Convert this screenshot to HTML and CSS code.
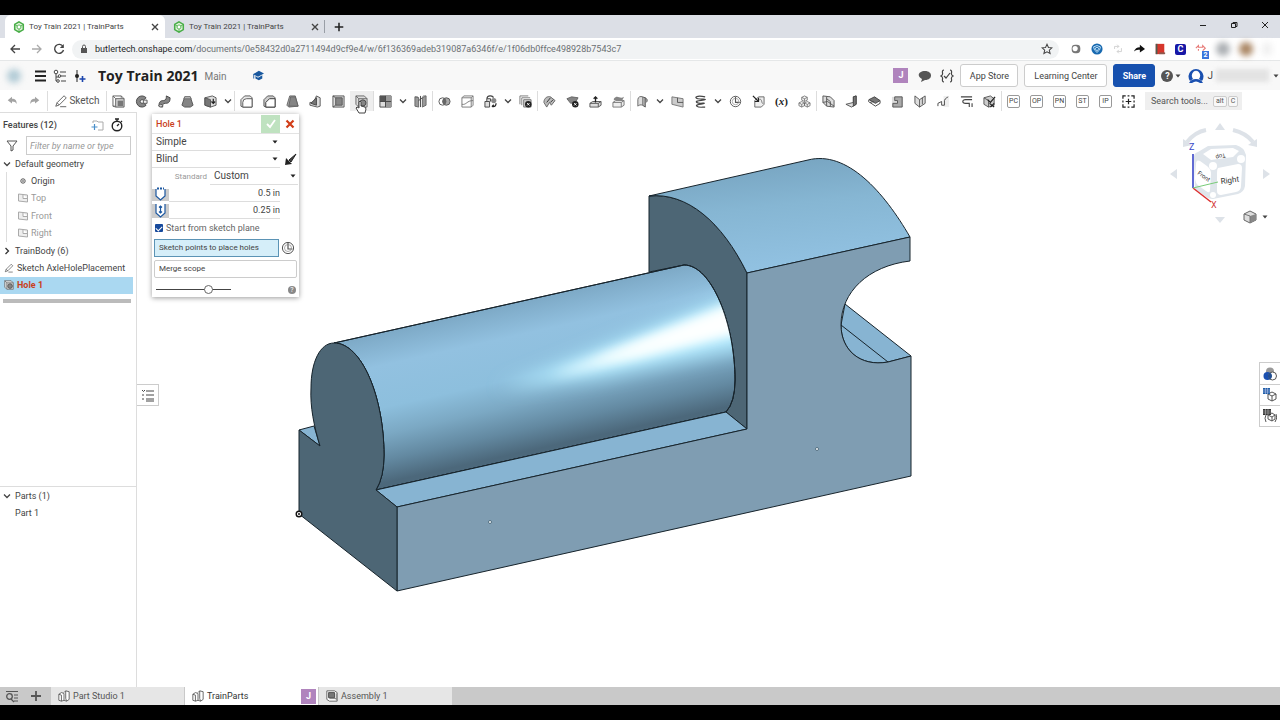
FILE: index.html
```html
<!DOCTYPE html>
<html lang="en">
<head>
<meta charset="utf-8">
<title>Toy Train 2021 | TrainParts</title>
<link rel="stylesheet" href="styles.css">
</head>
<body>
<svg class="defs" aria-hidden="true">
  <defs>
    <symbol id="logo" viewBox="0 0 14 14"><path d="M7 1l5 3v6l-5 3-5-3V4z" fill="#e3f4dc" stroke="#49ae48" stroke-width="1.8"/><path d="M7 4.5l2.2 1.2v2.6L7 9.5 4.8 8.300V5.700z" fill="#fff" stroke="#49ae48"/><path d="M2 4l3 2M12 4L9 6M7 13V9.500" stroke="#49ae48"/></symbol>
    <symbol id="x" viewBox="0 0 10 10"><path d="M2 2l6 6M8 2L2 8" stroke="currentColor" stroke-width="1.4"/></symbol>
    <symbol id="plus" viewBox="0 0 14 14"><path d="M7 2v10M2 7h10" stroke="currentColor" stroke-width="1.8"/></symbol>
    <symbol id="chev" viewBox="0 0 10 10"><path d="M2 3.500l3 3 3-3" fill="none" stroke="currentColor" stroke-width="1.300"/></symbol>
    <symbol id="caret" viewBox="0 0 8 8"><path d="M1.500 2.500h5L4 5.500z" fill="currentColor"/></symbol>
    <symbol id="undo" viewBox="0 0 14 14"><path d="M2 6l5-4v2.500c4 0 5.500 2 5.500 6C11.500 8.500 10 7.600 7 7.600V10z" fill="#a3a3a3"/></symbol>
    <symbol id="pencil" viewBox="0 0 16 16"><path d="M2 14l1.500-4L11.500 2 14 4.500 6 12.500zM3.500 10L6 12.500M7 14.500h7" fill="none" stroke="currentColor"/></symbol>
    <symbol id="extrude" viewBox="0 0 14 14"><path d="M1 1h9v2M1 1v11h2M1 1l3 3M10 1l3 3M1 12l3 1" fill="#eee" stroke="#666"/><path d="M4 4h9v9H4z" fill="#ddd" stroke="#555"/><path d="M6 6h6v6H6z" fill="#777"/></symbol>
    <symbol id="revolve" viewBox="0 0 14 14"><path d="M12 3A6 6 0 1 0 12 11L9 8.500A2 2 0 1 1 9 5.500z" fill="#858585" stroke="#444"/><path d="M9 5.500h4v3.500H9z" fill="#eee" stroke="#555"/></symbol>
    <symbol id="sweep" viewBox="0 0 14 14"><path d="M1 12C1 7 3 6 6 6s3-3 3-5l4 2c0 4-1 6-5 6-3 0-3 1-3 4z" fill="#858585" stroke="#444"/><ellipse cx="3" cy="11.500" rx="2" ry="1.500" fill="#ccc" stroke="#555"/></symbol>
    <symbol id="loft" viewBox="0 0 14 14"><path d="M4 2h6l3 9-3 2H4l-3-2z" fill="#858585" stroke="#555"/><path d="M4 2h6l1 2H3z" fill="#ccc" stroke="#555" stroke-width=".7"/></symbol>
    <symbol id="thicken" viewBox="0 0 14 14"><path d="M1 3l8-2 4 2v8l-6 2-6-2z" fill="#ddd" stroke="#555"/><path d="M1 3l6 2v8l-6-2z" fill="#777" stroke="#555"/><path d="M10 4v5M8 7l2 2 2-2" fill="none" stroke="#222" stroke-width="1.300"/></symbol>
    <symbol id="fillet" viewBox="0 0 14 14"><path d="M1 12V5l4-4h6l2 2v10H3z" fill="#e8e8e8" stroke="#555"/><path d="M3 13V8q0-4 4-4h6v9z" fill="#fff" stroke="#555"/></symbol>
    <symbol id="chamfer" viewBox="0 0 14 14"><path d="M1 12V5l4-4h6l2 2v10H3z" fill="#ccc" stroke="#555"/><path d="M3 13V8l4-4h6v9z" fill="#fff" stroke="#333"/></symbol>
    <symbol id="draft" viewBox="0 0 14 14"><path d="M4 1h6l3 11-10 1-2-2z" fill="#aaa" stroke="#666"/><path d="M5 2h5l3 10H3z" fill="#858585" stroke="#666"/></symbol>
    <symbol id="rib" viewBox="0 0 14 14"><path d="M8 1l4 2v9l-3 1-8-2V8h4z" fill="#ddd" stroke="#555"/><path d="M8 3v8L2 9z" fill="#777" stroke="#444"/></symbol>
    <symbol id="shell" viewBox="0 0 14 14"><path d="M1 1h12v12H1z" fill="#ddd" stroke="#555"/><path d="M4 3h7v8H4z" fill="#858585" stroke="#555"/><path d="M1 1l3 2M1 13l3-2" stroke="#555"/></symbol>
    <symbol id="hole" viewBox="0 0 14 14"><path d="M1 1h9l3 3v9H4l-3-3z" fill="#ddd" stroke="#666"/><path d="M1 1l3 3h9M4 4v9" fill="none" stroke="#666"/><circle cx="8.500" cy="8.500" r="3.300" fill="#858585" stroke="#444"/></symbol>
    <symbol id="pattern" viewBox="0 0 14 14"><path d="M1 1h12v12H1z" fill="#ddd" stroke="#444"/><path d="M1 1h6v6H1z" fill="#555"/><path d="M7 7h6v6H7zM7 1h6v6H7z" fill="#999"/><path d="M7 1v12M1 7h12" stroke="#444"/></symbol>
    <symbol id="mirror" viewBox="0 0 14 14"><path d="M1 2l4 1v10l-4-1zM9 3l4-2v10l-4 2z" fill="#999" stroke="#666"/><path d="M7 1v12M9 3L5 6" stroke="#444"/><path d="M1 2h3l1 1M13 1h-3L9 3" fill="none" stroke="#777"/></symbol>
    <symbol id="boolean" viewBox="0 0 14 14"><circle cx="5" cy="7" r="4" fill="#fff" stroke="#555"/><circle cx="9" cy="7" r="4" fill="#aaa" stroke="#555"/><path d="M7 3.500a4 4 0 0 1 0 7 4 4 0 0 1 0-7" fill="#666"/></symbol>
    <symbol id="split" viewBox="0 0 14 14"><path d="M1 3l2-2h10v10l-2 2H1zM1 3h10v10M11 3l2-2" fill="#fff" stroke="#777"/><path d="M1 10c5 1 5-4 12-4" fill="none" stroke="#777"/></symbol>
    <symbol id="transform" viewBox="0 0 14 14"><path d="M1 7h5v6H1zM3 7V4h4v3" fill="#ddd" stroke="#444"/><path d="M3 4C4-1 10 1 10 3" fill="none" stroke="#444" stroke-width="1.300"/><circle cx="10.500" cy="6" r="2.800" fill="#888"/><path d="M13 9q0 4-4 3.500M10.500 10.500L8.500 12.500" fill="none" stroke="#222" stroke-width="1.300"/></symbol>
    <symbol id="delpart" viewBox="0 0 14 14"><path d="M1 1h9M1 1v9M3 3h9M3 3v8M5 5h8v8H5z" fill="#ccc" stroke="#777"/><circle cx="10" cy="10" r="3.500" fill="#222"/><path d="M8.700 8.700l2.600 2.600M11.300 8.700l-2.600 2.600" stroke="#fff"/></symbol>
    <symbol id="modfillet" viewBox="0 0 14 14"><path d="M1 8C1 3 5 1 8 2l5 4-4 5-2-3-3 5z" fill="#bbb" stroke="#666"/><path d="M4 8l4-5M8 8l3-3" stroke="#333"/></symbol>
    <symbol id="delface" viewBox="0 0 14 14"><path d="M1 4l5-2 7 1-3 5-5 1z" fill="#858585" stroke="#666"/><circle cx="10" cy="10" r="3.500" fill="#222"/><path d="M8.700 8.700l2.600 2.600M11.300 8.700l-2.600 2.600" stroke="#fff"/></symbol>
    <symbol id="moveface" viewBox="0 0 14 14"><path d="M1 9l3-2h9v4l-3 2H1z" fill="#ddd" stroke="#555"/><path d="M1 9h9v4M10 9l3-2" fill="none" stroke="#555"/><path d="M7 8V2M5 4l2-2 2 2" fill="none" stroke="#222" stroke-width="1.400"/></symbol>
    <symbol id="repface" viewBox="0 0 14 14"><path d="M1 8l3-2h9v5l-3 2H1zM1 8h9v5M10 8l3-2" fill="#eee" stroke="#777"/><path d="M2 4c4-5 6 1 11-2l-2 4C8 8 6 4 2 6z" fill="#858585"/></symbol>
    <symbol id="offset" viewBox="0 0 14 14"><path d="M2 12V5c0-3 3-4 5-3v9c-2-1-4 0-5 1z" fill="#ddd" stroke="#666"/><path d="M7 2l3 1v10l-3-2M10 3c2 1 3 3 1 5" fill="#aaa" stroke="#555"/></symbol>
    <symbol id="plane" viewBox="0 0 14 14"><path d="M1 2l12 2v9L1 10z" fill="#ccc" stroke="#777"/><path d="M7 3v5h6" fill="none" stroke="#555"/></symbol>
    <symbol id="helix" viewBox="0 0 14 14"><path d="M12 2C2 0 0 3 4 4s9 0 8 1S0 6 3 8s9 0 8 1-10 1-8 3 6 1 9 1" fill="none" stroke="#444" stroke-width="1.300"/></symbol>
    <symbol id="clock" viewBox="0 0 14 14"><circle cx="7" cy="7" r="5.600" fill="#fff" stroke="#555"/><path d="M7 2v6h4.500" fill="none" stroke="#555" stroke-width="1.200"/><circle cx="7" cy="7" r="3.500" fill="none" stroke="#888" stroke-width=".7"/></symbol>
    <symbol id="derive" viewBox="0 0 14 14"><path d="M3 6l4-4h6v8l-3 3H3z" fill="#eee" stroke="#666"/><path d="M1 1l6 6M7 3v4H3" fill="none" stroke="#222" stroke-width="1.300"/><path d="M8 5c3-2 2 5 4 4" fill="none" stroke="#777"/></symbol>
    <symbol id="comp" viewBox="0 0 14 14"><path d="M7 1l3 1.500v3L7 7 4 5.500v-3zM4 7l3 1.500v3L4 13l-3-1.500v-3zM10 7l3 1.500v3L10 13l-3-1.500v-3zM4 2.500L7 4l3-1.500M7 4v3M1 8.500L4 10l3-1.500 3 1.500 3-1.500M4 10v3M10 10v3" fill="#eee" stroke="#666" stroke-width=".8"/></symbol>
    <symbol id="sheet" viewBox="0 0 14 14"><path d="M1 1l8 1 4 4v7l-8-1-4-4z" fill="#ddd" stroke="#555"/><path d="M5 2v10M1 8l5-1 7 5M5 4l4 3v5" fill="none" stroke="#555"/></symbol>
    <symbol id="flange" viewBox="0 0 14 14"><path d="M9 2l3-1v9l-5 3-6-3 8-2z" fill="#ddd" stroke="#555"/><path d="M9 2l3-1v9l-3 2z" fill="#777" stroke="#444"/></symbol>
    <symbol id="hem" viewBox="0 0 14 14"><path d="M1 5l6-3 6 4-5 3z" fill="#777" stroke="#444"/><path d="M1 5c-1 2 0 3 1 3l6 4 5-3V6M2 8l4-1" fill="none" stroke="#444"/></symbol>
    <symbol id="tab" viewBox="0 0 14 14"><path d="M1 2h12v11H1z" fill="#ddd"/><path d="M4 2h8v11H2V9h5V6H4z" fill="#aaa" stroke="#555"/></symbol>
    <symbol id="bend" viewBox="0 0 14 14"><path d="M1 1l5 4v8L1 9zM6 5l6-4v8l-6 4M9 3v7" fill="#ddd" stroke="#555"/></symbol>
    <symbol id="jog" viewBox="0 0 14 14"><path d="M7 1h6v12H7z" fill="#eee"/><path d="M1 9l4-2v4h3V6c1-3 3-3 4-4M1 9v3" fill="none" stroke="#444"/></symbol>
    <symbol id="relief" viewBox="0 0 14 14"><path d="M1 2h12M13 5H6q-3 0-3 2t3 2h4v4M13 9v4" fill="none" stroke="#444" stroke-width="1.200"/></symbol>
    <symbol id="finish" viewBox="0 0 14 14"><path d="M1 3l7-2 4 3v7l-6 2-5-3zM1 3l5 3v7" fill="#ccc" stroke="#555"/><path d="M5 5l3 3 5-6M7 9l5 4M12 9l-4 4" fill="none" stroke="#222" stroke-width="1.300"/></symbol>
    <symbol id="studio" viewBox="0 0 14 14"><path d="M1 5l3-2 3 1v8l-3 1-3-1zM1 5l3 1v7M7 3l2-2 4 1v9l-3 2-3-1M9 1v9l1 3" fill="#fff" stroke="#555"/></symbol>
    <symbol id="assembly" viewBox="0 0 14 14"><path d="M1 1h9l3 2v10H4l-3-2z" fill="#fff" stroke="#555"/><path d="M3 3h7v6H3z" fill="#777" stroke="#444"/><path d="M4 10h8M12 4v8" stroke="#777"/></symbol>
  </defs>
</svg>

<div class="screen">
<header class="browser">
  <div class="tabstrip">
    <div class="btab active"><svg class="i12"><use href="#logo"/></svg><span>Toy Train 2021 | TrainParts</span><button aria-label="Close tab"><svg class="i10"><use href="#x"/></svg></button></div>
    <div class="btab"><svg class="i12"><use href="#logo"/></svg><span>Toy Train 2021 | TrainParts</span><button aria-label="Close tab"><svg class="i10"><use href="#x"/></svg></button></div>
    <button class="newtab" aria-label="New tab"><svg class="i12"><use href="#plus"/></svg></button>
    <div class="winctl">
      <button aria-label="Minimize"><svg class="i10" viewBox="0 0 10 10"><path d="M2 5.500h6" stroke="#222"/></svg></button>
      <button aria-label="Restore"><svg class="i10" viewBox="0 0 10 10"><path d="M2.500 3.500h4v4h-4zM4 3.500v-1h4v4H6.500" fill="none" stroke="#222"/></svg></button>
      <button aria-label="Close window"><svg class="i10" viewBox="0 0 10 10"><path d="M2 2l6 6M8 2L2 8" stroke="#222"/></svg></button>
    </div>
  </div>
  <div class="address">
    <button aria-label="Back"><svg class="i14" viewBox="0 0 14 14"><path d="M12 7H3M7 3L3 7l4 4" fill="none" stroke="#444" stroke-width="1.300"/></svg></button>
    <button aria-label="Forward"><svg class="i14" viewBox="0 0 14 14"><path d="M2 7h9M7 3l4 4-4 4" fill="none" stroke="#aaa" stroke-width="1.300"/></svg></button>
    <button aria-label="Reload"><svg class="i14" viewBox="0 0 14 14"><path d="M11 4.500A4.500 4.500 0 1 0 11.500 8" fill="none" stroke="#444" stroke-width="1.400"/><path d="M11.800 2v4h-4z" fill="#444"/></svg></button>
    <div class="omnibox">
      <svg class="i10" viewBox="0 0 10 10"><path d="M2 4h6v5H2z" fill="#555"/><path d="M3.500 4V2.500q0-1.500 1.500-1.500t1.500 1.500V4" fill="none" stroke="#555"/></svg>
      <span class="url"><b>butlertech.onshape.com</b>/documents/0e58432d0a2711494d9cf9e4/w/6f136369adeb319087a6346f/e/1f06db0ffce498928b7543c7</span>
      <button aria-label="Bookmark"><svg class="i12" viewBox="0 0 14 14"><path d="M7 1.500l1.700 3.700 4 .4-3 2.700.9 4L7 10.200l-3.600 2.100.9-4-3-2.700 4-.4z" fill="none" stroke="#444" stroke-width="1.200"/></svg></button>
    </div>
    <div class="ext">
      <svg class="i12" viewBox="0 0 14 14"><rect x="2" y="2" width="10" height="10" rx="4" fill="#777"/><circle cx="6" cy="6.500" r="3" fill="#fff"/></svg>
      <svg class="i12" viewBox="0 0 14 14"><circle cx="7" cy="7" r="6.500" fill="#1769b0"/><path d="M3 4.500l4-1.500 4 1.500q0 4-4 6.500-4-2.500-4-6.500zM5 6l2-1 2 1q0 2-2 3-2-1-2-3z" fill="none" stroke="#d5efff"/></svg>
      <svg class="i12" viewBox="0 0 14 14"><path d="M3 7V4h5M6 2l2 2-2 2M11 6v4H6M8 8l-2 2 2 2" fill="none" stroke="#ccc"/></svg>
      <svg class="i12" viewBox="0 0 14 14"><path d="M1 10q2-5 7-5V2l6 5-6 4V8Q4 7 1 10z" fill="#111"/></svg>
      <svg class="i12" viewBox="0 0 14 14"><path d="M2 1h10v12H2z" fill="#d6362c"/><path d="M2 1h2v12H2z" fill="#4d5d50"/><path d="M6 11h7v2H6z" fill="#8a5b50"/></svg>
      <b class="cbadge">C</b>
      <span class="ext2"><svg class="i12" viewBox="0 0 14 14"><path d="M1 6l3-3v2h5V3l3 3-3 3M4 9V7" fill="none" stroke="#e77b78" stroke-width="1.300"/></svg><b>2</b></span>
      <i class="blur grey"></i><i class="blur brown"></i>
      <i class="blur faint"></i>
    </div>
  </div>
</header>

<header class="doc">
  <i class="blur cube"></i>
  <button aria-label="Menu"><svg class="i14" viewBox="0 0 14 14"><path d="M2 2.500h11M2 7h11M2 11.500h11" stroke="#222" stroke-width="2"/></svg></button>
  <button aria-label="Versions"><svg class="i14" viewBox="0 0 14 14"><path d="M7 3h6M8 7h5M8 12h5M3 5v7h3M3 8h4" fill="none" stroke="#444"/><circle cx="3" cy="3" r="1.800" fill="#fff" stroke="#444"/><circle cx="6.500" cy="7" r="1.300" fill="#fff" stroke="#444"/><circle cx="5" cy="12" r="1.300" fill="#fff" stroke="#444"/></svg></button>
  <button aria-label="Create version"><svg class="i14" viewBox="0 0 14 14"><path d="M4 1v12" stroke="#222"/><circle cx="4" cy="7" r="2" fill="#222"/><path d="M9.500 7v6M6.500 10h6" stroke="#1c46ad" stroke-width="1.600"/></svg></button>
  <h1>Toy Train 2021</h1><span class="branch">Main</span>
  <svg class="i12 cap" viewBox="0 0 14 14"><path d="M1 5l7-4 6 3-7 4zM4 7v3l4 2 4-2V6L7 9z" fill="#19589f"/><path d="M2 5v5" stroke="#19589f"/></svg>
  <div class="docright">
    <b class="jbadge">J</b>
    <button aria-label="Comments"><svg class="i14" viewBox="0 0 14 14"><path d="M7 2c8 0 8 9 0 9l-4 2 1-3C-2 7 1 2 7 2z" fill="#555"/></svg></button>
    <button aria-label="Scripts"><svg class="i14" viewBox="0 0 14 14"><path d="M4 1Q2 1 2.500 4 3 6 1 7q2 1 1.500 3Q2 13 4 13M10 1q2 0 1.500 3Q11 6 13 7q-2 1-1.500 3 .500 3-1.500 3M4 7l2 2 4-5" fill="none" stroke="#444" stroke-width="1.200"/></svg></button>
    <button class="btn appstore">App Store</button>
    <button class="btn learning">Learning Center</button>
    <button class="btn share">Share</button>
    <button class="help" aria-label="Help"><span>?</span><svg class="i8"><use href="#caret"/></svg></button>
    <button class="account" aria-label="Account"><svg class="i16" viewBox="0 0 16 16"><path d="M2 13a7.500 7.500 0 1 1 12 0l-3-2a4 5 0 1 0-6 0z" fill="#1a50b0"/><circle cx="8" cy="7.500" r="3.500" fill="#fff"/><path d="M1 15q2-4 7-4t7 4z" fill="#1a50b0"/><path d="M4 15q4-3 8 0z" fill="#fff"/></svg><span>J</span><i class="name"></i><svg class="i8"><use href="#caret"/></svg></button>
  </div>
</header>

<div class="toolbar">
  <div class="history"><button aria-label="Undo"><svg class="i12"><use href="#undo"/></svg></button><button aria-label="Redo" class="flip"><svg class="i12"><use href="#undo"/></svg></button></div>
  <button class="sketch"><svg class="i14"><use href="#pencil"/></svg>Sketch</button>
  <div class="group"><button aria-label="Extrude"><svg><use href="#extrude"/></svg></button><button aria-label="Revolve"><svg><use href="#revolve"/></svg></button><button aria-label="Sweep"><svg><use href="#sweep"/></svg></button><button aria-label="Loft"><svg><use href="#loft"/></svg></button><button aria-label="Thicken"><svg><use href="#thicken"/></svg></button><button class="more" aria-label="More solids"><svg><use href="#chev"/></svg></button></div>
  <div class="group"><button aria-label="Fillet"><svg><use href="#fillet"/></svg></button><button aria-label="Chamfer"><svg><use href="#chamfer"/></svg></button><button aria-label="Draft"><svg><use href="#draft"/></svg></button><button aria-label="Rib"><svg><use href="#rib"/></svg></button><button aria-label="Shell"><svg><use href="#shell"/></svg></button><button class="on" aria-label="Hole"><svg><use href="#hole"/></svg><svg class="hand" viewBox="0 0 12 14"><path d="M4 13L1 8l1-1 2 1V2l1-1 1 1v4l4 1 1 2-1 4z" fill="#fff" stroke="#444"/></svg></button></div>
  <div class="group"><button aria-label="Pattern"><svg><use href="#pattern"/></svg></button><button class="more" aria-label="More patterns"><svg><use href="#chev"/></svg></button><button aria-label="Mirror"><svg><use href="#mirror"/></svg></button></div>
  <div class="group"><button aria-label="Boolean"><svg><use href="#boolean"/></svg></button><button aria-label="Split"><svg><use href="#split"/></svg></button><button aria-label="Transform"><svg><use href="#transform"/></svg></button><button class="more" aria-label="More transforms"><svg><use href="#chev"/></svg></button><button aria-label="Delete part"><svg><use href="#delpart"/></svg></button></div>
  <div class="group"><button aria-label="Modify fillet"><svg><use href="#modfillet"/></svg></button><button aria-label="Delete face"><svg><use href="#delface"/></svg></button><button aria-label="Move face"><svg><use href="#moveface"/></svg></button><button aria-label="Replace face"><svg><use href="#repface"/></svg></button></div>
  <div class="group"><button aria-label="Offset surface"><svg><use href="#offset"/></svg></button><button class="more" aria-label="More surfaces"><svg><use href="#chev"/></svg></button><button aria-label="Plane"><svg><use href="#plane"/></svg></button><button aria-label="Helix"><svg><use href="#helix"/></svg></button><button class="more" aria-label="More curves"><svg><use href="#chev"/></svg></button><button aria-label="Mate connector"><svg><use href="#clock"/></svg></button><button aria-label="Derived"><svg><use href="#derive"/></svg></button><button class="var">(<i>x</i>)</button><button aria-label="Composite part"><svg><use href="#comp"/></svg></button></div>
  <div class="group"><button aria-label="Sheet metal model"><svg><use href="#sheet"/></svg></button><button aria-label="Flange"><svg><use href="#flange"/></svg></button><button aria-label="Hem"><svg><use href="#hem"/></svg></button><button aria-label="Tab"><svg><use href="#tab"/></svg></button><button aria-label="Bend"><svg><use href="#bend"/></svg></button><button aria-label="Make joint"><svg><use href="#jog"/></svg></button><button aria-label="Corner"><svg><use href="#relief"/></svg></button><button aria-label="Finish sheet metal"><svg><use href="#finish"/></svg></button></div>
  <div class="group"><button class="key"><span>PC</span></button><button class="key"><span>OP</span></button><button class="key"><span>PN</span></button><button class="key"><span>ST</span></button><button class="key"><span>IP</span></button><button aria-label="Add custom features"><svg viewBox="0 0 14 14"><path d="M1 4V1h3M10 1h3v3M13 10v3h-3M4 13H1v-3M6 1h2M6 13h2M1 6v2M13 6v2M7 4v6M4 7h6" fill="none" stroke="#222" stroke-width="1.300"/></svg></button></div>
  <button class="search">Search tools... <kbd>alt</kbd><kbd>C</kbd></button>
</div>

<main class="work">
  <aside class="side">
    <section class="features">
      <div class="fhead"><h2>Features (12)</h2>
        <button aria-label="New folder"><svg class="i14" viewBox="0 0 14 14"><path d="M3 5V3h4l1 1h5v8H8" fill="none" stroke="#aaa"/><path d="M4.500 6v6M1.500 9h6" stroke="#4a8fca" stroke-width="1.200"/></svg></button>
        <button aria-label="Rollback times"><svg class="i14" viewBox="0 0 14 14"><circle cx="7" cy="8" r="4.800" fill="none" stroke="#222" stroke-width="1.400"/><path d="M5 1h4M7 1v2M11 3l1 1M7 8l2-2" stroke="#222" stroke-width="1.300"/></svg></button></div>
      <div class="filter"><svg class="i12" viewBox="0 0 12 12"><path d="M1 1h10L7 6v4l-2 1V6z" fill="none" stroke="#555"/></svg><input type="text" placeholder="Filter by name or type" aria-label="Filter by name or type"></div>
      <ul class="tree">
        <li><svg class="i10"><use href="#chev"/></svg>Default geometry</li>
        <li class="sub dark"><svg class="i10" viewBox="0 0 10 10"><circle cx="5" cy="5" r="2.200" fill="none" stroke="#555"/><circle cx="5" cy="5" r=".8" fill="#333"/></svg>Origin</li>
        <li class="sub"><svg class="i10" viewBox="0 0 10 10"><path d="M.5 1l9 1v7l-9-1zM5 1.500V5.500h4.500" fill="#eee" stroke="#aaa"/></svg>Top</li>
        <li class="sub"><svg class="i10" viewBox="0 0 10 10"><path d="M.5 1l9 1v7l-9-1zM5 1.500V5.500h4.500" fill="#eee" stroke="#aaa"/></svg>Front</li>
        <li class="sub"><svg class="i10" viewBox="0 0 10 10"><path d="M.5 1l9 1v7l-9-1zM5 1.500V5.500h4.500" fill="#eee" stroke="#aaa"/></svg>Right</li>
        <li><svg class="i10" viewBox="0 0 10 10"><path d="M3.500 2l3 3-3 3" fill="none" stroke="#333" stroke-width="1.300"/></svg>TrainBody (6)</li>
        <li class="feat"><svg class="i10"><use href="#pencil"/></svg>Sketch AxleHolePlacement</li>
        <li class="feat sel"><svg class="i10"><use href="#hole"/></svg>Hole 1</li>
      </ul>
      <div class="rollback"></div>
    </section>
    <section class="parts">
      <ul><li><svg class="i10"><use href="#chev"/></svg>Parts (1)</li><li class="part">Part 1</li></ul>
    </section>
  </aside>

  <section class="view">
    <svg class="model" viewBox="137 112 1143 575" role="img" aria-label="Toy train model">
      <defs>
        <linearGradient id="cyl" gradientUnits="userSpaceOnUse" x1="509" y1="304" x2="541" y2="448">
          <stop offset="0" stop-color="#7da9c6"/><stop offset=".22" stop-color="#92c1e0"/><stop offset=".5" stop-color="#8dbfdd"/><stop offset=".68" stop-color="#7ba8c3"/><stop offset=".85" stop-color="#6389a1"/><stop offset="1" stop-color="#4c687b"/>
        </linearGradient>
        <linearGradient id="roof" x1="0" y1="0" x2=".25" y2="1"><stop offset="0" stop-color="#739fbb"/><stop offset=".5" stop-color="#86b6d3"/><stop offset="1" stop-color="#91c1e1"/></linearGradient>
        <clipPath id="body"><path id="barrel" d="M334 343L684 265C712 265 735 325 735 380Q735 402 726 412L376 490Q384 477 384 455C384 398 362 343 334 343Z"/></clipPath>
        <filter id="soft" x="-30%" y="-100%" width="160%" height="300%"><feGaussianBlur stdDeviation="9"/></filter>
        <filter id="glow" x="-30%" y="-100%" width="160%" height="300%"><feGaussianBlur stdDeviation="6"/></filter>
      </defs>
      <g stroke="#17242c" stroke-width="1" stroke-linejoin="round">
        <path d="M649 196C687 192 722 222 747 273V429L726 412Q735 402 735 380C735 325 712 265 684 265L649 272Z" fill="#4d6675"/>
        <path d="M649 196L808 160C847 150 884 192 910 237L747 273C722 222 687 192 649 196Z" fill="url(#roof)"/>
        <path d="M845 304L911 356 888 362C860 367 841 350 841 325Z" fill="#87b4d2"/>
        <path d="M841 325L888 362" />
        <path d="M299 430L314 426 320 446Z" fill="#87b4d2"/>
        <use href="#barrel" fill="url(#cyl)"/>
        <g clip-path="url(#body)" stroke="none"><path d="M500 388L755 286V346L600 377Z" fill="#b4ebff" filter="url(#soft)"/><path d="M550 376L755 294V328L640 358Z" fill="#f4ffff" filter="url(#glow)"/><path d="M590 362L755 300V326L640 352Z" fill="#fff" filter="url(#glow)"/></g>
        <use href="#barrel" fill="none"/>
        <path d="M376 490L726 412 747 429 397 507Z" fill="#87b4d2"/>
        <path d="M397 507L747 429V273L910 237V261C868 266 841 292 841 325 841 350 860 367 888 362L911 356V476L397 591Z" fill="#7f9db2"/>
        <path d="M299 430L320 446C314 426 310 407 311 388 311 362 320 343 334 343 362 343 384 398 384 455Q384 477 376 490L397 507V591L299 514Z" fill="#4d6675"/>
      </g>
      <g fill="#fff" stroke="#526f80"><circle cx="490" cy="522" r="1.500"/><circle cx="817" cy="449" r="1.500"/></g>
      <circle cx="299" cy="514" r="2.800" fill="#fff" stroke="#111" stroke-width="1.400"/><circle cx="299" cy="514" r="1" fill="#111"/>
    </svg>

    <button class="listbtn" aria-label="Show table"><svg class="i14" viewBox="0 0 14 14"><path d="M5 3h8M5 7h8M5 11h8M5 13h8" stroke="#444"/><path d="M1 2l1.500 1.500L4 2M1 7h2M1 11h2" fill="none" stroke="#444"/></svg></button>

    <form class="dialog">
      <div class="dhead"><h3>Hole 1</h3><button type="button" class="ok" aria-label="Accept"><svg class="i12" viewBox="0 0 12 12"><path d="M2 6l3 3 5-7" fill="none" stroke="#fff" stroke-width="1.800"/></svg></button><button type="button" class="no" aria-label="Cancel"><svg class="i12" viewBox="0 0 12 12"><path d="M2.500 2.500l7 7M9.500 2.500l-7 7" stroke="#d23d18" stroke-width="2.200"/></svg></button></div>
      <div class="drow"><span class="pick"><select aria-label="Hole style"><option>Simple</option></select><svg class="i8"><use href="#caret"/></svg></span></div>
      <div class="drow"><span class="pick"><select aria-label="Hole end"><option>Blind</option></select><svg class="i8"><use href="#caret"/></svg></span><button type="button" aria-label="Flip direction"><svg class="i14" viewBox="0 0 14 14"><path d="M13 1L6 7l2 2z" fill="#444" stroke="#222"/><path d="M2 12l1-7 6 6z" fill="#222"/></svg></button></div>
      <div class="drow std"><label for="std">Standard</label><span class="pick"><select id="std"><option>Custom</option></select><svg class="i8"><use href="#caret"/></svg></span></div>
      <div class="drow dim"><svg viewBox="0 0 17 14"><path d="M0 2h17v12H0z" fill="#ccc"/><path d="M4 2h9v7l-4.500 4L4 9z" fill="#fff"/><path d="M4 2v7l4.500 4L13 9V2" fill="none" stroke="#1b57a0" stroke-width="1.200"/><path d="M5 1.500h7" stroke="#1b57a0" stroke-width="2" stroke-dasharray="2 1"/></svg><input value="0.5 in" aria-label="Diameter"></div>
      <div class="drow dim"><svg viewBox="0 0 17 14"><path d="M0 0h17v14H0z" fill="#ccc"/><path d="M4 0h9v9l-4.500 4L4 9z" fill="#fff"/><path d="M4 0v9l4.500 4L13 9V0M8.500 2v7M7 3.500L8.500 2 10 3.500M7 7.500L8.500 9 10 7.500" fill="none" stroke="#1b57a0" stroke-width="1.200"/></svg><input value="0.25 in" aria-label="Depth"></div>
      <label class="check"><input type="checkbox" checked>Start from sketch plane</label>
      <div class="pickrow"><button type="button" class="points">Sketch points to place holes</button><button type="button" aria-label="Mate connector"><svg class="i14"><use href="#clock"/></svg></button></div>
      <button type="button" class="merge">Merge scope</button>
      <div class="dfoot"><input type="range" min="0" max="100" value="72" aria-label="Preview opacity"><button type="button" class="q" aria-label="Help">?</button></div>
    </form>

    <svg class="cubenav" viewBox="0 0 104 108" role="img" aria-label="View cube">
      <g fill="#dde2e8"><path d="M47 16l5-7 5 7zM47 103l5 6 5-6zM2 60l7-5v10zM102 60l-7-5v10z"/></g>
      <path d="M19 28Q27 18 38 16M65 16Q78 19 85 28" fill="none" stroke="#dde2e8" stroke-width="4"/>
      <path d="M15 25v8l9-2zM89 25v8l-9-2z" fill="#dde2e8"/>
      <path d="M26 43q0-4 4-5l10-6 28-1q8 2 10 10l-1 31q-1 6-7 8l-25 5q-5 0-8-3l-10-7z" fill="#dfe5eb"/>
      <path d="M35 40l8-5 22-1 6 3-6 6-22 3zM28 50q0-5 4-3l7 5q4 3 4 8l-1 16q0 4-4 1l-7-5q-4-3-4-8zM50 54l20-4q4 0 4 4l-1 18q0 5-5 6l-15 3q-4 0-4-4V59q0-4 1-5z" fill="#fff"/>
      <circle cx="45" cy="52" r="4" fill="#fff"/><circle cx="73" cy="45" r="4" fill="#fff"/><circle cx="45" cy="81" r="3" fill="#fff"/>
      <path d="M25 74V40" stroke="#2b39c5" stroke-width="1.500"/><path d="M25 74l18 14" stroke="#dc2f2f" stroke-width="1.500"/><path d="M25 74l25-6" stroke="#78cb78"/>
      <text x="21" y="36" fill="#3a49c9" class="axis">Z</text><text x="43" y="94" fill="#d23535" class="axis">X</text>
      <text x="53" y="70" class="face" transform="rotate(-7 53 70)">Right</text>
      <text class="front" transform="translate(29 60) rotate(35)">Front</text>
      <text class="front" transform="translate(57 39) rotate(165)">Top</text>
    </svg>
    <button class="shade" aria-label="Display style"><svg class="i14" viewBox="0 0 14 14"><path d="M1 4l6-3 6 3v6l-6 3-6-3z" fill="#ddd" stroke="#666"/><path d="M7 6l6-2v6l-6 3z" fill="#888"/><path d="M1 4l6 2v7" fill="none" stroke="#777"/></svg><svg class="i8"><use href="#caret"/></svg></button>
    <div class="dock">
      <button aria-label="Appearance"><svg viewBox="0 0 14 14"><circle cx="7" cy="4.500" r="4" fill="#999"/><circle cx="4.500" cy="9" r="4" fill="#1b50b0"/><circle cx="9.500" cy="9" r="4" fill="#fff" stroke="#555"/><path d="M7 5.500a4 4 0 0 0 0 7 4 4 0 0 0 0-7" fill="#234f91"/></svg></button>
      <button aria-label="Configurations"><svg viewBox="0 0 14 14"><path d="M5 6l4-2 4 2v5l-4 2-4-2zM5 6l4 2 4-2M9 8v5" fill="#fff" stroke="#555"/><path d="M0 0h7v6H0z" fill="#1f5fa8"/><path d="M0 2h7M0 4h7M2.500 0v6M4.500 0v6" stroke="#cce" stroke-width=".5"/></svg></button>
      <button aria-label="Custom tables"><svg viewBox="0 0 14 14"><path d="M5 6l4-2 3 2v4l-3 2-4-2zM5 6l4 2 3-2M9 8v4M3 6q-2 3 0 7M13 5q2 4-1 8" fill="none" stroke="#555"/><path d="M0 0h8v6H0z" fill="#333"/><path d="M0 2h8M0 4h8M2.500 0v6M5 0v6" stroke="#ccc" stroke-width=".5"/></svg></button>
    </div>
  </section>
</main>

<nav class="tabs">
  <button class="tool" aria-label="Tab manager"><svg class="i14" viewBox="0 0 14 14"><path d="M1 2.500h12M9 6h4M9 9h4M9 12h4" stroke="#555"/><circle cx="4.500" cy="7.500" r="2.800" fill="none" stroke="#555" stroke-width="1.300"/><path d="M6 10l3 3" stroke="#555" stroke-width="1.300"/></svg></button>
  <button class="tool" aria-label="Insert tab"><svg class="i14"><use href="#plus"/></svg></button>
  <button class="dtab"><svg class="i12"><use href="#studio"/></svg>Part Studio 1</button>
  <button class="dtab current"><svg class="i12"><use href="#studio"/></svg>TrainParts<b class="jbadge">J</b></button>
  <button class="dtab"><svg class="i12"><use href="#assembly"/></svg>Assembly 1</button>
</nav>
</div>
</body>
</html>
```

FILE: styles.css
```css
* { box-sizing: border-box; }
body { margin: 0; background: #000; color: #444; font: 9px/12px Roboto, "Liberation Sans", sans-serif; }
button, input, select { font: inherit; color: inherit; margin: 0; padding: 0; border: 0; background: none; }
button { display: flex; align-items: center; justify-content: center; flex: none; }
svg { display: block; flex: none; }
ul { list-style: none; margin: 0; padding: 0; }
h1, h2, h3 { margin: 0; }
.defs { position: absolute; width: 0; height: 0; }
.i8 { width: 8px; height: 8px; }
.i10 { width: 10px; height: 10px; }
.i12 { width: 12px; height: 12px; }
.i14 { width: 14px; height: 14px; }
.i16 { width: 16px; height: 16px; }
.screen { min-height: 100vh; padding: 15px 0; display: flex; flex-direction: column; }

.tabstrip { display: flex; height: 23px; padding-left: 5px; background: #dcdfe6; }
.btab { width: 160px; display: flex; align-items: center; gap: 4px; padding: 0 5px 0 8px; font-size: 8px; position: relative; }
.btab span { flex: 1; white-space: nowrap; }
.btab.active { background: #fff; border-radius: 6px 6px 0 0; }
.btab:not(.active)::after { content: ""; position: absolute; right: 0; top: 5px; height: 13px; border-right: 1px solid #999ea6; }
.newtab { width: 27px; color: #222; }
.winctl { margin-left: auto; display: flex; }
.winctl button { width: 31px; height: 20px; }

.address { display: flex; align-items: center; height: 23px; padding-left: 4px; background: #fff; border-bottom: 1px solid #e5e7e8; }
.address > button { width: 22px; }
.omnibox { flex: 1; display: flex; align-items: center; gap: 6px; height: 19px; margin-left: 2px; padding: 0 6px 0 7px; border-radius: 10px; background: #f1f3f4; min-width: 0; }
.url { flex: 1; color: #6b6f73; white-space: nowrap; overflow: hidden; }
.url b { font-weight: 400; color: #26282a; }
.ext { display: flex; align-items: center; gap: 9px; padding: 0 8px 0 11px; }
.cbadge { width: 11px; height: 11px; background: #1717a6; color: #fff; border-radius: 2px; line-height: 11px; text-align: center; }
.ext2 { position: relative; }
.ext2 b { position: absolute; right: -2px; bottom: -4px; width: 7px; height: 8px; background: #3874dc; color: #fff; font-size: 7px; line-height: 8px; text-align: center; }
.blur { width: 14px; height: 14px; filter: blur(3px); border-radius: 7px; }
.grey { background: #aaaeb2; }
.brown { background: #a98562; }
.faint { background: #f0f0f0; width: 10px; }
.cube { background: #b2cbd6; margin-right: 9px; }

.doc { display: flex; align-items: center; height: 29px; padding-left: 7px; background: #f8f8f8; }
.doc > button { width: 20px; }
.doc h1 { font: 700 14px/18px "Open Sans", "Noto Sans", sans-serif; color: #222; margin-left: 8px; white-space: nowrap; }
.branch { margin-left: 6px; font-size: 10px; line-height: 18px; padding-top: 3px; color: #777; }
.cap { margin-left: 25px; }
.docright { margin-left: auto; display: flex; align-items: center; }
.jbadge { width: 15px; height: 15px; background: #b084bd; color: #fff; line-height: 15px; text-align: center; }
.docright > button[aria-label="Comments"] { margin-left: 10px; }
.docright > button[aria-label="Scripts"] { margin: 0 6px 0 8px; }
.btn { height: 23px; border: 1px solid #ccc; border-radius: 3px; background: #fff; margin-right: 6px; white-space: nowrap; }
.appstore { width: 58px; }
.learning { width: 83px; }
.share { width: 42px; background: #1650ae; border-color: #1650ae; color: #fff; font-weight: 700; }
.help span { width: 12px; height: 12px; border-radius: 6px; background: #555; color: #fff; font-weight: 700; }
.help { gap: 1px; }
.account { margin-left: 6px; gap: 3px; font-size: 10px; }
.name { width: 53px; height: 13px; background: #e3e3e3; filter: blur(2px); }

.toolbar { display: flex; align-items: center; height: 22px; background: #fff; color: #555; }
.history { display: flex; width: 48px; border-right: 1px solid #ddd; }
.history button { width: 23px; height: 20px; }
.flip svg { transform: scaleX(-1); }
.sketch { width: 58px; gap: 1px; font-size: 10px; }
.group { display: flex; border-left: 1px solid #ddd; height: 20px; align-items: center; }
.group button { width: 23px; height: 20px; position: relative; color: #444; }
.group svg { width: 13px; height: 13px; }
.group .more { width: 12px; }
.group .more svg { width: 10px; height: 10px; }
.group .on { background: #eee; }
.group .hand { position: absolute; left: 5px; top: 9px; width: 12px; height: 14px; z-index: 2; }
.group .var { font: bold 11px/12px "Liberation Serif", serif; color: #222; }
.key span { width: 13px; height: 13px; border: 1px solid #999; border-radius: 2px; font-size: 7px; line-height: 11px; text-align: center; }
.search { margin-left: 5px; width: 97px; height: 18px; background: #efefef; justify-content: flex-start; padding-left: 6px; white-space: nowrap; }
.search kbd { font: 7px/9px Roboto, sans-serif; border: 1px solid #ccc; border-radius: 2px; padding: 0 2px; margin-left: 1px; background: #f8f8f8; }
.search kbd:first-child { margin-left: 5px; }

.work { flex: 1; display: flex; min-height: 0; }
.side { width: 137px; flex: none; display: flex; flex-direction: column; background: #fff; border-top: 1px solid #ddd; border-right: 1px solid #ddd; }
.features { flex: 1; border-bottom: 1px solid #ddd; }
.fhead { display: flex; align-items: center; height: 23px; padding: 0 12px 0 3px; gap: 6px; }
.fhead h2 { flex: 1; font-size: 9px; font-weight: 500; white-space: nowrap; }
.filter { display: flex; align-items: center; gap: 8px; padding: 0 5px 0 6px; }
.filter input { flex: 1; min-width: 0; height: 19px; border: 1px solid #ccc; padding: 0 3px; font-style: italic; }
.filter input::placeholder { color: #999; }
.tree { display: grid; grid-auto-rows: 1fr; min-height: 139px; padding-right: 3px; }
.tree li, .parts li { display: flex; align-items: center; gap: 3px; padding-left: 2px; white-space: nowrap; }
.tree .sub { margin-left: 6px; padding-left: 11px; border-left: 1px solid #ddd; color: #999; }
.tree .dark { color: #444; }
.tree .feat { padding-left: 4px; }
.tree .sel { background: #aad8f1; color: #c9401c; font-weight: 700; }
.rollback { height: 4px; margin: 5px 5px 0 3px; background: #bbb; }
.parts { height: 200px; }
.parts li { height: 17px; }
.parts .part { padding-left: 15px; }

.view { flex: 1; position: relative; background: #fff; min-width: 0; }
.model { width: 100%; height: 100%; position: absolute; }
.listbtn { position: absolute; left: 0; top: 272px; width: 22px; height: 22px; border: 1px solid #ccc; border-left: 0; background: #fff; }
.dialog { position: absolute; left: 15px; top: 2px; width: 147px; padding-top: 1px; background: #fff; box-shadow: 0 1px 5px #0006; }
.dhead { display: flex; align-items: center; height: 19px; border-bottom: 1px solid #e3e3e3; padding-left: 4px; }
.dhead h3 { flex: 1; font-size: 9px; font-weight: 500; color: #c9401c; }
.ok { width: 19px; height: 18px; background: #bfe2c0; }
.no { width: 19px; }
.drow { display: flex; align-items: center; height: 17px; padding-right: 19px; }
.drow button { width: 19px; margin-right: -19px; }
.pick { flex: 1; display: flex; align-items: center; position: relative; height: 17px; border-bottom: 1px solid #ddd; color: #444; font-size: 10px; }
.pick select { width: 100%; appearance: none; padding-left: 4px; }
.pick svg { position: absolute; right: 1px; color: #222; }
.std { padding-right: 1px; }
.std label { width: 58px; padding-right: 3px; text-align: right; font-size: 8px; color: #999; }
.dim svg { width: 17px; height: 14px; }
.dim input { flex: 1; min-width: 0; height: 17px; text-align: right; border-bottom: 1px solid #ddd; }
.check { display: flex; align-items: center; gap: 3px; height: 17px; padding-left: 3px; color: #666; white-space: nowrap; }
.check input { appearance: none; width: 8px; height: 8px; border-radius: 1px; background: #174a9c; display: grid; place-items: center; }
.check input::after { content: ""; width: 5px; height: 3px; border: solid #fff; border-width: 0 0 1px 1px; transform: rotate(-45deg); }
.pickrow { display: flex; align-items: center; margin: 3px 0 3px 2px; gap: 2px; }
.points { width: 125px; height: 18px; border: 1px solid #5b93b5; background: #d5eef9; font-size: 8px; justify-content: flex-start; padding-left: 4px; }
.merge { width: 143px; height: 18px; margin-left: 2px; border: 1px solid #ccc; border-radius: 2px; font-size: 8px; justify-content: flex-start; padding-left: 4px; }
.dfoot { display: flex; align-items: center; justify-content: space-between; height: 19px; padding: 4px 3px 0 4px; }
.dfoot input { appearance: none; width: 75px; height: 9px; background: linear-gradient(#444, #444) center / 100% 1px no-repeat; }
.dfoot input::-webkit-slider-thumb { appearance: none; width: 9px; height: 9px; border-radius: 5px; border: 1px solid #666; background: #fff; }
.q { width: 8px; height: 8px; border-radius: 4px; background: #888; color: #fff; font-size: 7px; line-height: 8px; }
.cubenav { position: absolute; right: 8px; top: 2px; width: 104px; height: 108px; overflow: visible; }
.axis { font: 9px Roboto, sans-serif; }
.face { font: 8px Roboto, sans-serif; fill: #333; }
.front { font: 6px Roboto, sans-serif; fill: #333; }
.shade { position: absolute; right: 11px; top: 98px; gap: 4px; }
.dock { position: absolute; right: 0; top: 250px; width: 21px; border: 1px solid #ccc; border-right: 0; background: #fff; }
.dock button { width: 20px; height: 21px; }
.dock button + button { border-top: 1px solid #ccc; }
.dock svg { width: 14px; height: 14px; }

.tabs { display: flex; height: 18px; background: #c9c9c9; color: #555; }
.tool { width: 24px; }
.tool:nth-child(2) { margin-right: 3px; }
.dtab { width: 133px; margin-right: 1px; padding: 0 2px 0 7px; gap: 3px; justify-content: flex-start; background: #e6e6e6; }
.dtab .jbadge { margin-left: auto; }
.dtab.current { background: #fff; color: #333; }
```
